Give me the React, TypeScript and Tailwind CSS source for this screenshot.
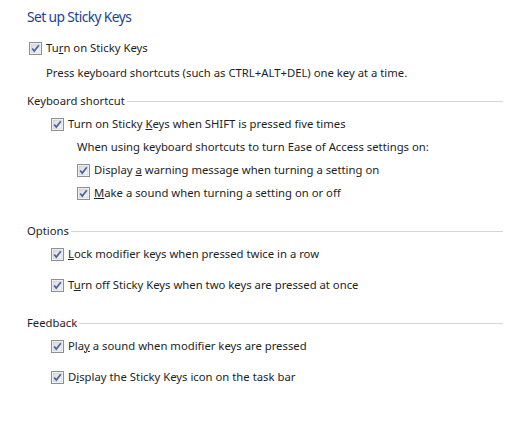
import React from "react";

const CheckBox = () => (
  <svg width="13" height="13" viewBox="0 0 13 13" className="shrink-0">
    <defs>
      <linearGradient id="cbg" x1="0" y1="0" x2="1" y2="1">
        <stop offset="0" stopColor="#d9dadb" />
        <stop offset="1" stopColor="#f7f7f7" />
      </linearGradient>
    </defs>
    <rect x="0.5" y="0.5" width="12" height="12" fill="#fff" stroke="#8f8f8f" />
    <rect x="2" y="2" width="9" height="9" fill="url(#cbg)" stroke="#c4c6c9" strokeWidth="0.6" />
    <path d="M3.2 6.4 L5.3 9.1 L9.8 3.2" fill="none" stroke="#4c61a2" strokeWidth="1.7" />
  </svg>
);

const Check = ({ children, className }: { children: React.ReactNode; className: string }) => (
  <div className={"flex items-center h-5 gap-[4px] " + className}>
    <CheckBox />
    <span>{children}</span>
  </div>
);

const Section = ({ title, className }: { title: string; className: string }) => (
  <div className={"flex items-center h-5 pl-[27px] pr-[2px] " + className}>
    <span>{title}</span>
    <div className="flex-1 h-px bg-[#d5d5d5] ml-[2px]" />
  </div>
);

const App = () => {
  return (
    <div
      className="w-[505px] h-[422px] bg-white text-[11.3px] text-[#1e1e1e] overflow-hidden pt-[7px]"
      style={{ fontFamily: '"Noto Sans", "Open Sans", sans-serif' }}
    >
      <h1 className="pl-[27px] text-[13.8px] tracking-[-0.6px] leading-5 text-[#1c3f94]">Set up Sticky Keys</h1>

      <Check className="pl-[29px] mt-[11px]">
        Tu<u>r</u>n on Sticky Keys
      </Check>
      <div className="pl-[46px] h-5 flex items-center mt-[5px]">
        Press keyboard shortcuts (such as CTRL+ALT+DEL) one key at a time.
      </div>

      <Section title="Keyboard shortcut" className="mt-[8px]" />
      <Check className="pl-[51px] mt-[3px]">
        Turn on Sticky <u>K</u>eys when SHIFT is pressed five times
      </Check>
      <div className="pl-[77px] h-5 flex items-center mt-[3px]">
        When using keyboard shortcuts to turn Ease of Access settings on:
      </div>
      <Check className="pl-[77px] mt-[3px]">
        Display <u>a</u> warning message when turning a setting on
      </Check>
      <Check className="pl-[77px] mt-[3px]">
        <u>M</u>ake a sound when turning a setting on or off
      </Check>

      <Section title="Options" className="mt-[18px]" />
      <Check className="pl-[51px] mt-[3px]">
        <u>L</u>ock modifier keys when pressed twice in a row
      </Check>
      <Check className="pl-[51px] mt-[11px]">
        T<u>u</u>rn off Sticky Keys when two keys are pressed at once
      </Check>

      <Section title="Feedback" className="mt-[18px]" />
      <Check className="pl-[51px] mt-[3px]">
        Pla<u>y</u> a sound when modifier keys are pressed
      </Check>
      <Check className="pl-[51px] mt-[11px]">
        D<u>i</u>splay the Sticky Keys icon on the task bar
      </Check>
    </div>
  );
};

export default App;
